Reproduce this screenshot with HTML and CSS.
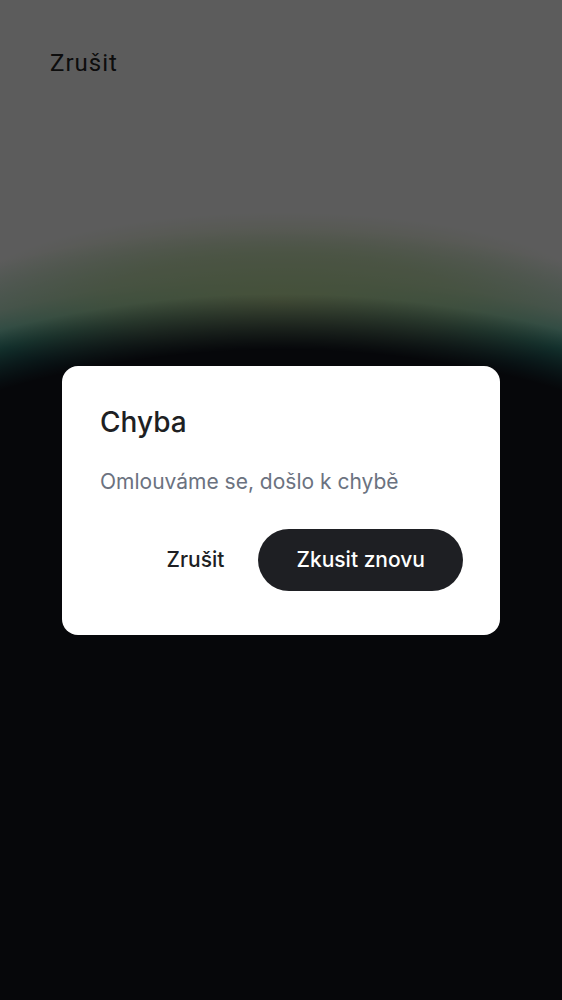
FILE: index.html
```html
<!DOCTYPE html>
<html lang="cs">
<head>
<meta charset="utf-8">
<title>Chyba</title>
<link rel="stylesheet" href="styles.css">
</head>
<body>
<div class="page">
  <header class="topbar">
    <span class="topbar-cancel">Zrušit</span>
  </header>
  <main class="hero">
    <p class="hero-text">Dobrý večer, prosím</p>
  </main>
</div>

<div class="scrim">
  <div class="dialog" role="alertdialog" aria-labelledby="dlg-title">
    <h2 class="dialog-title" id="dlg-title">Chyba</h2>
    <p class="dialog-body">Omlouváme se, došlo k chybě</p>
    <div class="dialog-actions">
      <button class="btn btn-text">Zrušit</button>
      <button class="btn btn-primary">Zkusit znovu</button>
    </div>
  </div>
</div>
</body>
</html>
```
FILE: styles.css
```css
* { box-sizing: border-box; }

html, body {
  margin: 0;
  padding: 0;
}

body {
  font-family: Inter, "Noto Sans", sans-serif;
  background: #13161e;
}

.page {
  min-height: 1000px;
  display: flex;
  flex-direction: column;
  background:
    radial-gradient(ellipse 690px 460px at 281px 800px, #13161e 0, #13161e 98%, rgba(19,22,30,0) 110%),
    radial-gradient(ellipse 320px 90px at 281px 302px, rgba(200,226,160,0.95) 0, rgba(200,226,160,0.6) 55%, rgba(200,226,160,0) 100%),
    radial-gradient(ellipse 690px 460px at 281px 800px, #1c7d86 98%, #45b9a5 106%, rgba(140,215,185,0.55) 114%, rgba(255,255,255,0) 124%),
    #ffffff;
}

.topbar {
  padding: 49px 50px 0;
}

.topbar-cancel {
  font-family: Roboto, "Liberation Sans", sans-serif;
  font-size: 24px;
  letter-spacing: 1px;
  color: #262626;
}

.hero {
  padding-top: 534px;
  padding-right: 42px;
  text-align: center;
}

.hero-text {
  margin: 0;
  font-size: 20px;
  line-height: 24px;
  color: #c9ccd3;
}

.scrim {
  position: fixed;
  inset: 0;
  background: rgba(0, 0, 0, 0.64);
  display: flex;
  align-items: center;
  justify-content: center;
}

.dialog {
  width: 438px;
  background: #ffffff;
  border-radius: 16px;
  padding: 39px 37px 44px 38px;
}

.dialog-title {
  margin: 0;
  font-size: 28px;
  line-height: 34px;
  font-weight: 500;
  color: #1e1f23;
}

.dialog-body {
  margin: 31px 0 0;
  font-size: 21px;
  line-height: 24px;
  color: #6b7280;
}

.dialog-actions {
  margin-top: 35px;
  display: flex;
  justify-content: flex-end;
  align-items: center;
  gap: 34px;
}

.btn {
  font-family: Inter, "Noto Sans", sans-serif;
  font-size: 21px;
  font-weight: 500;
  border: 0;
  cursor: pointer;
}

.btn-text {
  background: transparent;
  padding: 0;
  color: #1e1f23;
}

.btn-primary {
  height: 62px;
  padding: 0 38px;
  border-radius: 31px;
  background: #1e1f23;
  color: #ffffff;
}
```
